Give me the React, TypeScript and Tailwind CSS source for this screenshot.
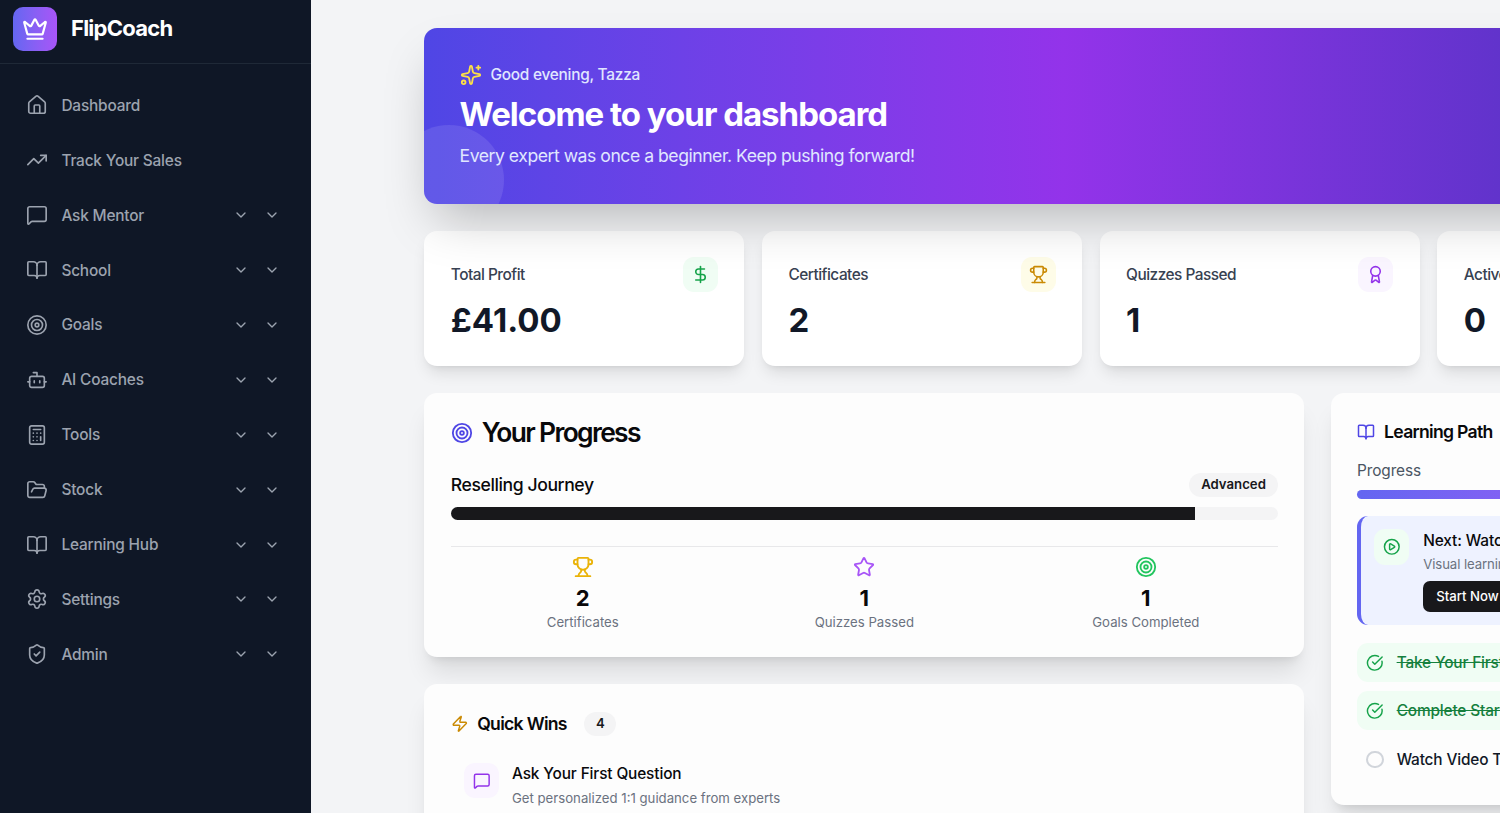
import React from "react";
import {
  Award,
  Bot,
  BookOpen,
  Calculator,
  ChevronDown,
  CircleCheckBig,
  CirclePlay,
  Crown,
  DollarSign,
  FolderOpen,
  House,
  MessageSquare,
  Settings,
  ShieldCheck,
  Sparkles,
  Star,
  Target,
  TrendingUp,
  Trophy,
  Zap,
} from "lucide-react";

const NAV = [
  { label: "Dashboard", icon: House },
  { label: "Track Your Sales", icon: TrendingUp },
  { label: "Ask Mentor", icon: MessageSquare, more: true },
  { label: "School", icon: BookOpen, more: true },
  { label: "Goals", icon: Target, more: true },
  { label: "AI Coaches", icon: Bot, more: true },
  { label: "Tools", icon: Calculator, more: true },
  { label: "Stock", icon: FolderOpen, more: true },
  { label: "Learning Hub", icon: BookOpen, more: true },
  { label: "Settings", icon: Settings, more: true },
  { label: "Admin", icon: ShieldCheck, more: true },
];

const STATS = [
  { label: "Total Profit", value: "£41.00", icon: DollarSign, box: "bg-[#f0fdf4]", color: "text-[#16a34a]" },
  { label: "Certificates", value: "2", icon: Trophy, box: "bg-[#fefce8]", color: "text-[#ca8a04]" },
  { label: "Quizzes Passed", value: "1", icon: Award, box: "bg-[#faf5ff]", color: "text-[#9333ea]" },
  { label: "Active Goals", value: "0", icon: Target, box: "bg-[#eff6ff]", color: "text-[#2563eb]" },
];

const TOTALS = [
  { label: "Certificates", value: "2", icon: Trophy, color: "text-[#eab308]" },
  { label: "Quizzes Passed", value: "1", icon: Star, color: "text-[#a855f7]" },
  { label: "Goals Completed", value: "1", icon: Target, color: "text-[#22c55e]" },
];

const Sidebar = () => (
  <aside className="w-[311px] shrink-0 h-full bg-[#0f1726]">
    <div className="h-[64px] pl-[13px] pb-[6px] flex items-center gap-[14px] border-b border-[#1f2937]">
      <div className="w-[44px] h-[44px] rounded-[10px] bg-gradient-to-r from-[#6366f1] to-[#a855f7] flex items-center justify-center">
        <Crown size={26} className="text-white" />
      </div>
      <span className="text-[22px] font-bold tracking-[-0.75px] text-white">FlipCoach</span>
    </div>
    <nav className="pt-[14px] flex flex-col">
      {NAV.map((item) => (
        <div key={item.label} className="h-[54.9px] pl-[26.4px] pr-[31px] flex items-center text-[#9ca3af]">
          <item.icon size={22} strokeWidth={1.8} />
          <span className="ml-[13px] flex-1 text-[15.4px] font-medium tracking-[-0.18px]">{item.label}</span>
          {item.more && (
            <span className="flex items-center gap-[15px]">
              <ChevronDown size={16} />
              <ChevronDown size={16} />
            </span>
          )}
        </div>
      ))}
    </nav>
  </aside>
);

const Hero = () => (
  <section className="relative h-[176px] overflow-hidden rounded-[13px] bg-gradient-to-r from-[#4f46e5] via-[#9333ea] via-48% to-[#4330ba] shadow-2xl px-[35.2px] pt-[35px]">
    <div className="absolute left-[-30px] bottom-[-31px] w-[110px] h-[110px] rounded-full bg-white/10" />
    <div className="relative flex items-center gap-[8.8px] h-[24px] text-[15.4px] font-medium tracking-[-0.24px] text-[#e0e7ff]">
      <Sparkles size={22} className="text-[#fde047]" />
      Good evening, Tazza
    </div>
    <h1 className="relative mt-[7px] text-[33px] leading-[40px] font-bold tracking-[-1px] text-white">Welcome to your dashboard</h1>
    <p className="relative mt-[10px] text-[17.6px] leading-[24px] tracking-[-0.47px] text-[#e0e7ff]">
      Every expert was once a beginner. Keep pushing forward!
    </p>
  </section>
);

const StatCard = ({ stat }: any) => (
  <div className="h-[135px] rounded-[13px] bg-white shadow-lg pt-[26px] px-[26.4px]">
    <div className="flex items-center justify-between">
      <span className="text-[15.4px] font-medium tracking-[-0.5px] text-[#374151]">{stat.label}</span>
      <span className={`w-[35.2px] h-[35.2px] rounded-[11px] flex items-center justify-center ${stat.box}`}>
        <stat.icon size={19} className={stat.color} />
      </span>
    </div>
    <div className="mt-[8px] text-[33px] leading-[40px] font-bold text-[#111827]">{stat.value}</div>
  </div>
);

const ProgressCard = () => (
  <div className="col-span-2 h-[264px] rounded-[13px] bg-[#fdfdfd] shadow-xl px-[26.4px] pt-[26px]">
    <div className="flex items-center gap-[9px] h-[28px]">
      <Target size={22} className="text-[#4f46e5]" />
      <h2 className="text-[26.4px] font-semibold tracking-[-1.66px] text-[#09090b]">Your Progress</h2>
    </div>
    <div className="mt-[26px] flex items-center justify-between h-[24px]">
      <span className="text-[17.6px] font-medium tracking-[-0.41px] text-[#09090b]">Reselling Journey</span>
      <span className="rounded-full bg-[#f4f4f5] px-[12px] h-[24px] flex items-center text-[13.2px] font-semibold text-[#18181b]">
        Advanced
      </span>
    </div>
    <div className="mt-[10px] h-[13.2px] rounded-full bg-[#f4f4f5] overflow-hidden">
      <div className="h-full w-[90%] bg-[#18181b]" />
    </div>
    <div className="mt-[26px] border-t border-[#e8e8ea] pt-[9px] grid grid-cols-3 gap-[17.6px]">
      {TOTALS.map((t) => (
        <div key={t.label} className="flex flex-col items-center">
          <t.icon size={22} className={t.color} />
          <span className="mt-[7px] text-[22px] leading-[26px] font-bold text-[#09090b]">{t.value}</span>
          <span className="mt-[1px] text-[13.2px] leading-[20px] text-[#6b7280]">{t.label}</span>
        </div>
      ))}
    </div>
  </div>
);

const LearningPath = () => (
  <div className="row-span-2 h-[412px] rounded-[13px] bg-[#fdfdfd] shadow-xl px-[26.4px] pt-[26px]">
    <div className="flex items-center gap-[9px] h-[26px]">
      <BookOpen size={18} className="text-[#4f46e5]" />
      <h3 className="text-[17.6px] font-semibold tracking-[-0.7px] text-[#09090b]">Learning Path</h3>
    </div>
    <div className="mt-[14px] text-[15.4px] leading-[24px] tracking-[-0.1px] text-[#4b5563]">Progress</div>
    <div className="mt-[7px] h-[8.8px] rounded-full bg-gradient-to-r from-[#6366f1] to-[#a855f7]" />
    <div className="mt-[17.6px] h-[109px] rounded-[11px] border-l-4 border-[#6366f1] bg-[#eef2ff] pl-[13px] pt-[13px] flex gap-[14px]">
      <span className="w-[35.2px] h-[35.2px] shrink-0 rounded-[11px] bg-[#f0fdf4] flex items-center justify-center">
        <CirclePlay size={17.6} className="text-[#16a34a]" />
      </span>
      <div className="pt-[1px]">
        <div className="text-[15.4px] leading-[22px] font-medium tracking-[-0.1px] text-[#09090b] whitespace-nowrap">Next: Watch Video Tutorial</div>
        <div className="mt-[2px] text-[13.2px] leading-[20px] tracking-[-0.1px] text-[#6b7280] whitespace-nowrap">Visual learning at your own pace</div>
        <div className="mt-[7px] h-[31px] w-fit rounded-[7px] bg-[#18181b] px-[13px] flex items-center text-[13.2px] font-medium text-white">
          Start Now
        </div>
      </div>
    </div>
    <div className="mt-[17.6px] flex flex-col gap-[9.5px]">
      <div className="h-[39px] rounded-[11px] bg-[#f0fdf4] pl-[9px] flex items-center gap-[13px] whitespace-nowrap">
        <CircleCheckBig size={17.6} className="text-[#16a34a]" />
        <span className="text-[15.4px] font-medium tracking-[-0.15px] text-[#15803d] line-through">Take Your First Quiz</span>
      </div>
      <div className="h-[39px] rounded-[11px] bg-[#f0fdf4] pl-[9px] flex items-center gap-[13px] whitespace-nowrap">
        <CircleCheckBig size={17.6} className="text-[#16a34a]" />
        <span className="text-[15.4px] font-medium tracking-[-0.15px] text-[#15803d] line-through">Complete Starter Course</span>
      </div>
      <div className="h-[39px] pl-[9px] flex items-center gap-[13px] whitespace-nowrap">
        <span className="w-[17.6px] h-[17.6px] rounded-full border-2 border-[#d1d5db]" />
        <span className="text-[15.4px] font-medium tracking-[-0.15px] text-[#111827]">Watch Video Tutorial</span>
      </div>
    </div>
  </div>
);

const QuickWins = () => (
  <div className="col-span-2 h-[200px] rounded-[13px] bg-[#fdfdfd] shadow-xl px-[26.4px] pt-[28px]">
    <div className="flex items-center h-[24px]">
      <Zap size={17.6} className="text-[#ca8a04]" />
      <h3 className="ml-[8.8px] text-[17.6px] font-semibold tracking-[-0.7px] text-[#09090b]">Quick Wins</h3>
      <span className="ml-[17.6px] w-[32px] h-[24px] rounded-full bg-[#f4f4f5] flex items-center justify-center text-[13.2px] font-semibold text-[#18181b]">
        4
      </span>
    </div>
    <div className="mt-[27px] ml-[13px] flex gap-[13px]">
      <span className="w-[35.2px] h-[35.2px] rounded-[11px] bg-[#faf5ff] flex items-center justify-center">
        <MessageSquare size={17.6} className="text-[#9333ea]" />
      </span>
      <div>
        <div className="text-[15.4px] leading-[22px] font-medium tracking-[-0.13px] text-[#09090b]">Ask Your First Question</div>
        <div className="mt-[3px] text-[13.2px] leading-[20px] text-[#6b7280]">
          Get personalized 1:1 guidance from experts
        </div>
      </div>
    </div>
  </div>
);

export default function App() {
  return (
    <div className="flex w-full h-[813px] overflow-hidden bg-[#f3f4f6] font-['Inter',sans-serif]">
      <Sidebar />
      <main className="flex-1 min-w-0 overflow-hidden pl-[113.4px] pt-[28px]">
        <div className="w-[1333px] flex flex-col gap-[27px]">
          <Hero />
          <div className="grid grid-cols-4 gap-[17.6px]">
            {STATS.map((s) => (
              <StatCard key={s.label} stat={s} />
            ))}
          </div>
          <div className="grid grid-cols-3 gap-x-[26.4px] gap-y-[27px] items-start">
            <ProgressCard />
            <LearningPath />
            <QuickWins />
          </div>
        </div>
      </main>
    </div>
  );
}
